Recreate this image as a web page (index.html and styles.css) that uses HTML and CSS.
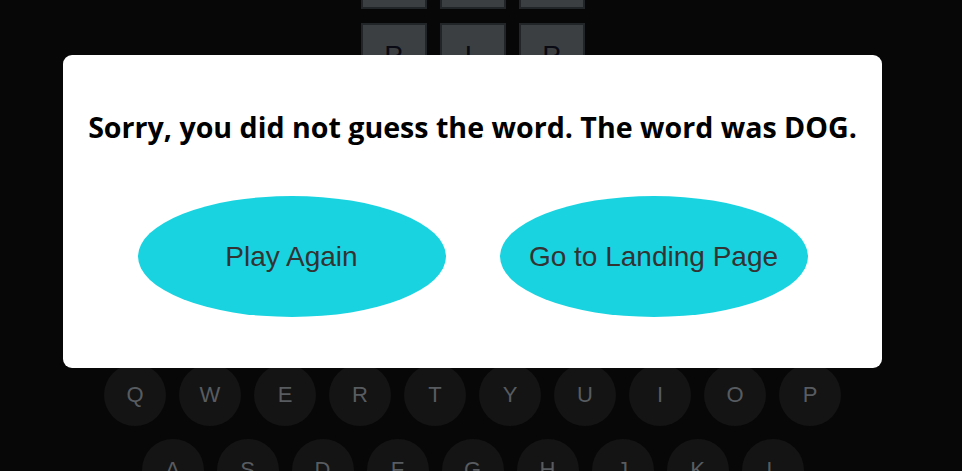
FILE: index.html
```html
<!DOCTYPE html>
<html lang="en">
<head>
<meta charset="utf-8">
<title>Word Game</title>
<link rel="stylesheet" href="styles.css">
</head>
<body>
<div class="page">
  <main class="game">
    <section class="board">
      <div class="row">
        <div class="tile"></div><div class="tile"></div><div class="tile"></div>
      </div>
      <div class="row">
        <div class="tile">P</div><div class="tile">L</div><div class="tile">P</div>
      </div>
      <div class="row">
        <div class="tile"></div><div class="tile"></div><div class="tile"></div>
      </div>
      <div class="row">
        <div class="tile"></div><div class="tile"></div><div class="tile"></div>
      </div>
    </section>
    <section class="keyboard">
      <div class="krow">
        <div class="key">Q</div><div class="key">W</div><div class="key">E</div><div class="key">R</div><div class="key">T</div><div class="key">Y</div><div class="key">U</div><div class="key">I</div><div class="key">O</div><div class="key">P</div>
      </div>
      <div class="krow">
        <div class="key">A</div><div class="key">S</div><div class="key">D</div><div class="key">F</div><div class="key">G</div><div class="key">H</div><div class="key">J</div><div class="key">K</div><div class="key">L</div>
      </div>
    </section>
  </main>
  <div class="modal">
    <h2 class="message">Sorry, you did not guess the word. The word was DOG.</h2>
    <div class="actions">
      <button class="btn">Play Again</button>
      <button class="btn">Go to Landing Page</button>
    </div>
  </div>
</div>
</body>
</html>
```

FILE: styles.css
```css
html, body {
  margin: 0;
  padding: 0;
  background: #070707;
  height: 100%;
  overflow: hidden;
}
.page {
  position: relative;
  display: flow-root;
  width: 945px;
  height: 471px;
  overflow: hidden;
  font-family: "Liberation Sans", Arial, sans-serif;
}
.game {
  display: flex;
  flex-direction: column;
  align-items: center;
  margin-top: -57px;
}
.board {
  display: flex;
  flex-direction: column;
  gap: 14px;
}
.row {
  display: flex;
  gap: 13px;
}
.tile {
  box-sizing: border-box;
  width: 66px;
  height: 66px;
  background: #3b3f42;
  border: 2px solid #222527;
  display: flex;
  align-items: center;
  justify-content: center;
  font-size: 28px;
  color: #0a0a14;
}
.keyboard {
  margin-top: 115px;
  display: flex;
  flex-direction: column;
  align-items: center;
  gap: 13px;
}
.krow {
  display: flex;
  gap: 13px;
}
.key {
  width: 62px;
  height: 62px;
  border-radius: 50%;
  background: #141414;
  color: #585c60;
  font-size: 22px;
  display: flex;
  align-items: center;
  justify-content: center;
}
.modal {
  position: absolute;
  left: 63px;
  top: 55px;
  width: 819px;
  height: 313px;
  box-sizing: border-box;
  background: #fff;
  border-radius: 9px;
  display: flex;
  flex-direction: column;
  align-items: center;
  padding-top: 54px;
}
.message {
  margin: 0;
  font-family: "Open Sans", "Noto Sans", sans-serif;
  font-weight: 700;
  font-size: 28.6px;
  line-height: 36px;
  color: #000;
  white-space: nowrap;
}
.actions {
  display: flex;
  gap: 54px;
  margin-top: 51px;
}
.btn {
  width: 308px;
  height: 121px;
  border: none;
  border-radius: 50%;
  background: #1ad3e0;
  color: #333;
  font-family: "Liberation Sans", Arial, sans-serif;
  font-size: 28px;
  padding: 0;
}
```
